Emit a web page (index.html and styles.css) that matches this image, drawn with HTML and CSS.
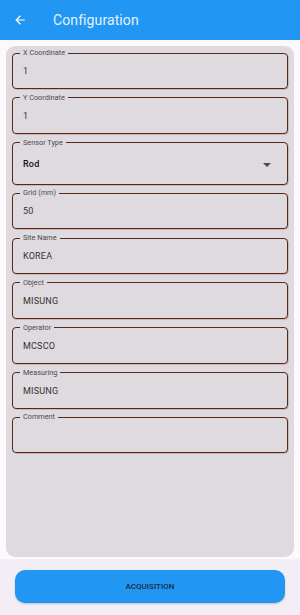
FILE: index.html
```html
<!DOCTYPE html>
<html lang="en">
<head>
    <meta charset="UTF-8">
    <meta name="viewport" content="width=device-width, initial-scale=1.0">
    <title>Configuration</title>
    <link rel="stylesheet" href="styles.css">
</head>
<body>
    <header class="app-bar">
        <button class="back-btn" aria-label="Back">
            <svg width="14" height="14" viewBox="0 0 24 24"><path d="M20 11H7.83l5.59-5.59L12 4l-8 8 8 8 1.41-1.41L7.83 13H20v-2z" fill="#fff"/></svg>
        </button>
        <h1 class="title">Configuration</h1>
    </header>

    <main class="card">
        <fieldset class="field">
            <legend>X Coordinate</legend>
            <div class="value">1</div>
        </fieldset>
        <fieldset class="field">
            <legend>Y Coordinate</legend>
            <div class="value">1</div>
        </fieldset>
        <fieldset class="field select">
            <legend>Sensor Type</legend>
            <div class="value strong">Rod</div>
            <span class="caret"></span>
        </fieldset>
        <fieldset class="field">
            <legend>Grid (mm)</legend>
            <div class="value">50</div>
        </fieldset>
        <fieldset class="field">
            <legend>Site Name</legend>
            <div class="value">KOREA</div>
        </fieldset>
        <fieldset class="field">
            <legend>Object</legend>
            <div class="value">MISUNG</div>
        </fieldset>
        <fieldset class="field">
            <legend>Operator</legend>
            <div class="value">MCSCO</div>
        </fieldset>
        <fieldset class="field">
            <legend>Measuring</legend>
            <div class="value">MISUNG</div>
        </fieldset>
        <fieldset class="field">
            <legend>Comment</legend>
            <div class="value"></div>
        </fieldset>
    </main>

    <footer class="bottom">
        <button class="acq-btn">ACQUISITION</button>
    </footer>
</body>
</html>
```

FILE: styles.css
```css
* { box-sizing: border-box; }

body {
    margin: 0;
    background: #fcf8fc;
    font-family: Roboto, "Noto Sans", sans-serif;
    height: 615px;
    display: flex;
    flex-direction: column;
}

.app-bar {
    height: 40px;
    background: #2196f3;
    display: flex;
    align-items: center;
    padding: 0 0 0 13px;
}
.back-btn {
    background: none;
    border: none;
    padding: 0;
    width: 14px;
    height: 14px;
    display: flex;
}
.title {
    margin: 0 0 0 26px;
    font-size: 14px;
    font-weight: 400;
    color: #e3f2fd;
    letter-spacing: 0.1px;
}

.card {
    margin: 6px 6px 0 6px;
    height: 511px;
    background: #dfdadf;
    border-radius: 9px;
    padding: 3px 6px 0 6px;
    display: flex;
    flex-direction: column;
    gap: 4.8px;
}

.field {
    margin: 0;
    min-width: 0;
    height: 40px;
    padding: 0 7px;
    border: 1.5px solid #552818;
    border-radius: 4px;
    box-shadow: 0.5px 0.5px 0 #c09088;
    position: relative;
    flex-shrink: 0;
}
.field.select { height: 46px; }
.field legend {
    font-size: 7.3px;
    line-height: 8px;
    color: #4e4a4e;
    padding: 0 3px;
    margin-left: 0;
}
.value {
    font-size: 9px;
    line-height: 28px;
    height: 28px;
    padding-left: 3px;
    color: #333;
    letter-spacing: 0.2px;
}
.value.strong {
    line-height: 34px;
    height: 34px;
    color: #111;
    font-weight: 500;
}
.caret {
    position: absolute;
    right: 16px;
    top: 16px;
    width: 0;
    height: 0;
    border-left: 4px solid transparent;
    border-right: 4px solid transparent;
    border-top: 4px solid #4a4a4a;
}

.bottom {
    flex: 1;
    margin-top: 2px;
    background: #f3eef5;
    padding: 11px 15px 0 15px;
}
.acq-btn {
    width: 100%;
    height: 33px;
    border: none;
    border-radius: 10px;
    background: #2196f3;
    color: #1b2a3c;
    font-family: Roboto, "Noto Sans", sans-serif;
    font-size: 8px;
    font-weight: 500;
    box-shadow: 0 1px 2px rgba(0,0,0,0.2);
}
```
